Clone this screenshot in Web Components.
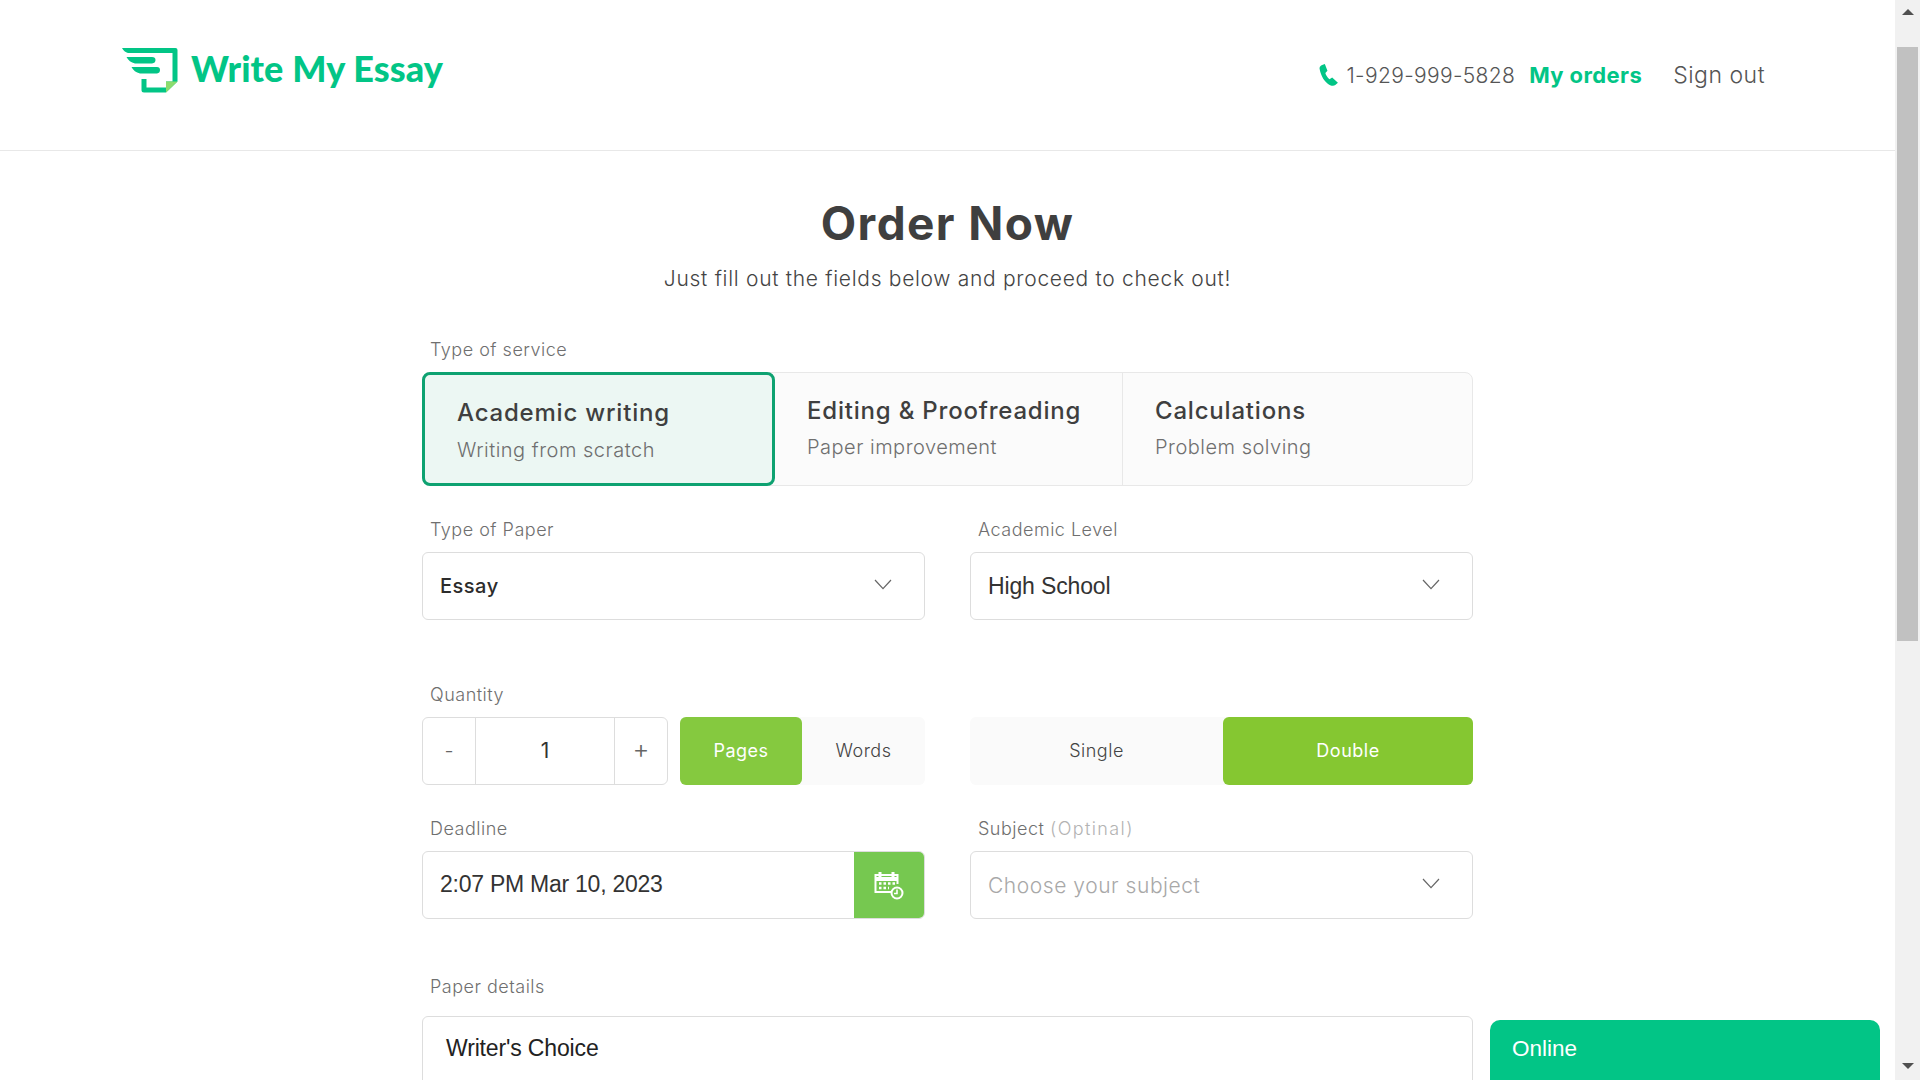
<!DOCTYPE html>
<html lang="en"><head><meta charset="utf-8"><title>Order Now</title>
<style>
html,body{margin:0;height:100%;overflow:hidden;background:#fff}
body{font-family:Inter,"Liberation Sans",sans-serif;color:#3f3f3f}
</style></head><body>
<x-app>
  <x-header></x-header>
  <x-order></x-order>
</x-app>
<script>
const el=(name,css,html,init)=>{customElements.define(name,class extends HTMLElement{
  constructor(){super();this.attachShadow({mode:'open'}).innerHTML=`<style>${css}</style>${typeof html==='function'?html(this):html}`;}
});};
const chevron=`<svg width="18" height="11" viewBox="0 0 18 11" fill="none" stroke="#666" stroke-width="1.2"><path d="M1 1l8 8.6L17 1"/></svg>`;

el('x-app',`:host{display:flex;height:1080px;width:1920px;position:relative;overflow:hidden}
 .main{width:1895px;flex:none}
 .bar{width:25px;flex:none;background:#f1f1f1;display:flex;flex-direction:column;align-items:center;box-sizing:border-box;padding-top:9px}
 .up,.down{width:0;height:0;border:6px solid transparent}
 .up{border-top:0;border-bottom:6px solid #505050}
 .thumb{width:21px;height:594px;background:#c1c1c1;margin-top:32px}
 .down{border-bottom:0;border-top:6px solid #505050;margin-top:auto;margin-bottom:11px}`,
 `<div class="main"><slot></slot></div><div class="bar"><div class="up"></div><div class="thumb"></div><div class="down"></div></div><x-chat></x-chat>`);

el('x-header',`:host{display:flex;box-sizing:border-box;height:151px;border-bottom:1px solid #e8e8e8;padding:0 130px 0 122px;position:relative}
 .logo{display:flex;align-items:flex-start;gap:13px;padding-top:48px;margin-right:auto}
 .logo span{font:900 36px/1 Lato,sans-serif;color:#02c586;margin-top:2px;letter-spacing:.1px}
 nav{display:flex;align-items:center;height:151px;padding-bottom:1px;box-sizing:border-box;color:#555}
 nav svg{margin-right:8px}
 .p{margin-right:14px;font-weight:300;font-size:21px;letter-spacing:.35px}
 .o{color:#02c586;font-weight:700;margin-right:31px;font-size:22px;letter-spacing:.4px}
 .s{font-weight:300;font-size:23px;letter-spacing:.5px}`,
 `<div class="logo"><svg width="56" height="46" viewBox="0 0 56 46"><path fill="#02c586" d="M0 0H53.500Q55.500 0 55.500 2V33.500L44 44.500H22Q19.500 44.500 19.500 42V31H24.500V39.500H44V33.500H50.500V5H6Q2 4 0 0Z"/><path fill="#02c586" d="M4.500 9H30Q33.500 9 33.500 12T30 15.500H13Q7 14 4.500 9ZM9.500 19H35Q38 19 38 22T35 25.500H18Q12 24 9.500 19Z"/><path fill="#8cdc6e" d="M44 44.500V33.500H55.500Z"/></svg><span>Write My Essay</span></div>
 <nav><svg width="19" height="22" viewBox="0 0 18 21"><path fill="#02c586" d="M.5 4.500C0 2 2.500 1 5.500 0L8 6.500 6 8.500C6.500 10.500 8 13 10 14.500L12.500 13 18 18 15.500 20C13.500 21.500 10.500 20.500 8 18.500 4 15.500 1.500 10 .5 4.500Z"/></svg><span class="p">1-929-999-5828</span><span class="o">My orders</span><span class="s">Sign out</span></nav>`);

el('x-order',`:host{display:block;width:1051px;margin:0 auto}
 h1{margin:0;text-align:center;font:700 46px/56px Inter,sans-serif;letter-spacing:1.4px;color:#3f3f3f;padding-top:44px}
 p{margin:0;text-align:center;font-size:21px;font-weight:300;line-height:28px;padding-top:14px;color:#444;letter-spacing:.7px;margin-bottom:46px}
 .g{display:grid;grid-template-columns:1fr 1fr;column-gap:45px}
 .mt1{margin-top:33px}.mt2{margin-top:64px}.mt3{margin-top:33px}
 .q{display:flex;gap:12px}
 .area{display:block;box-sizing:border-box;height:120px;border:1px solid #ddd;border-radius:6px;padding:15px 23px;font:23px/32px "Liberation Sans",sans-serif;letter-spacing:-.15px;color:#222}`,
 `<h1>Order Now</h1><p>Just fill out the fields below and proceed to check out!</p>
 <x-field label="Type of service"><x-services></x-services></x-field>
 <div class="g mt1"><x-field label="Type of Paper"><x-select value="Essay" kind="bold"></x-select></x-field><x-field label="Academic Level"><x-select value="High School" kind="arial"></x-select></x-field></div>
 <div class="g mt2"><x-field label="Quantity"><div class="q"><x-stepper></x-stepper><x-toggle a="Pages" b="Words" on="a" style="width:245px;--cols:122px 1fr;--on:#85c93f"></x-toggle></div></x-field><x-field label="&nbsp;"><x-toggle a="Single" b="Double" on="b" style="--cols:253px 1fr;--on:#85c731"></x-toggle></x-field></div>
 <div class="g mt3"><x-field label="Deadline"><x-date></x-date></x-field><x-field label="Subject" hint="(Optinal)"><x-select value="Choose your subject" kind="ph"></x-select></x-field></div>
 <x-field gap="18" label="Paper details" style="display:block;margin-top:57px"><div class="area">Writer's Choice</div></x-field>`);

el('x-field',`:host{display:block}
 label{display:block;font-size:18px;line-height:22px;font-weight:300;color:#6f6f6f;padding-left:8px;margin-bottom:11px;letter-spacing:.5px}
 i{font-style:normal;color:#b3b3b3;letter-spacing:1.4px}`,
 t=>`<label style="${t.hasAttribute('gap')?`margin-bottom:${t.getAttribute('gap')}px`:''}">${t.getAttribute('label')}${t.hasAttribute('hint')?` <i>${t.getAttribute('hint')}</i>`:''}</label><slot></slot>`);

el('x-services',`:host{display:grid;grid-template-columns:352px 347px 1fr;height:114px;box-sizing:border-box;border:1px solid #e8e8e8;border-radius:8px;background:#fbfbfb}
 .c{padding:23px 0 0 32px;position:relative;box-sizing:border-box;white-space:nowrap}
 .c+.c+.c{border-left:1px solid #e8e8e8}
 .a{background:#ecf7f3;border:3px solid #0ea271;border-radius:8px;margin:-1px 0 -1px -1px;padding:23px 0 0 32px}
 .a span{margin-top:9px}
 b{display:block;font-size:24px;line-height:30px;font-weight:500;color:#3f3f3f;letter-spacing:.8px}
 span{display:block;font-size:20px;line-height:26px;font-weight:300;color:#6f6f6f;margin-top:8px;letter-spacing:.5px}`,
 `<div class="c a"><b>Academic writing</b><span>Writing from scratch</span></div><div class="c"><b>Editing &amp; Proofreading</b><span>Paper improvement</span></div><div class="c"><b>Calculations</b><span>Problem solving</span></div>`);

el('x-select',`:host{display:flex;align-items:center;justify-content:space-between;box-sizing:border-box;height:68px;border:1px solid #ddd;border-radius:6px;padding:0 32px 0 17px;background:#fff}
 span{font-size:20px}
 .bold{font-weight:500;color:#2c2c2c;letter-spacing:.5px}
 .arial{font:23px "Liberation Sans",sans-serif;letter-spacing:-.15px;color:#333}
 .ph{font-weight:300;color:#a8a8a8;font-size:21px;letter-spacing:.55px}
 svg{margin-top:-3px}`,
 t=>`<span class="${t.getAttribute('kind')}">${t.getAttribute('value')}</span>${chevron}`);

el('x-stepper',`:host{display:grid;grid-template-columns:52px 1fr 53px;width:246px;height:68px;box-sizing:border-box;border:1px solid #ddd;border-radius:6px;flex:none;text-align:center;line-height:66px;color:#666;font-size:20px;font-weight:300}
 div+div{border-left:1px solid #ddd}
 .n{font-size:21px;color:#333;font-weight:400}
 .plus{font-size:26px;line-height:62px}`,
 `<div>-</div><div class="n">1</div><div class="plus">+</div>`);

el('x-toggle',`:host{display:grid;grid-template-columns:var(--cols);height:68px;background:#fafafa;border-radius:6px;font-size:18px;font-weight:300;color:#444;text-align:center;line-height:68px;letter-spacing:.5px}
 .on{background:var(--on);color:#fff;border-radius:6px;font-weight:400}`,
 t=>{const o=t.getAttribute('on');return `<div class="${o==='a'?'on':''}">${t.getAttribute('a')}</div><div class="${o==='b'?'on':''}">${t.getAttribute('b')}</div>`});

el('x-date',`:host{display:flex;box-sizing:border-box;height:68px;border:1px solid #ddd;border-radius:6px}
 span{flex:1;font:23px/65px "Liberation Sans",sans-serif;letter-spacing:-.25px;color:#333;padding-left:17px}
 div{width:70px;background:#76c850;border-radius:0 5px 5px 0;display:flex;align-items:center;justify-content:center}`,
 `<span>2:07 PM Mar 10, 2023</span><div><svg width="30" height="29" viewBox="0 0 30 29" fill="none" stroke="#fff"><path stroke-width="2" d="M17 21H1.500V4H23.500V13"/><path stroke-width="3" d="M6 1V6M19 1V6"/><path stroke-width="4" d="M1.500 8H23.500"/><path stroke-width="2.500" stroke-dasharray="2.500 2" d="M5 12.500H21M5 17H15"/><circle cx="23" cy="22" r="5.500" stroke-width="2"/><path stroke-width="1.600" d="M23 18.500V22.500H20"/></svg></div>`);

el('x-chat',`:host{position:absolute;left:1490px;top:1020px;width:390px;height:60px;background:#02c586;border-radius:10px 10px 0 0;color:#fff;font:22.500px/58px "Liberation Sans",sans-serif;padding-left:22px;box-sizing:border-box}`,`Online`);
</script>
</body></html>
